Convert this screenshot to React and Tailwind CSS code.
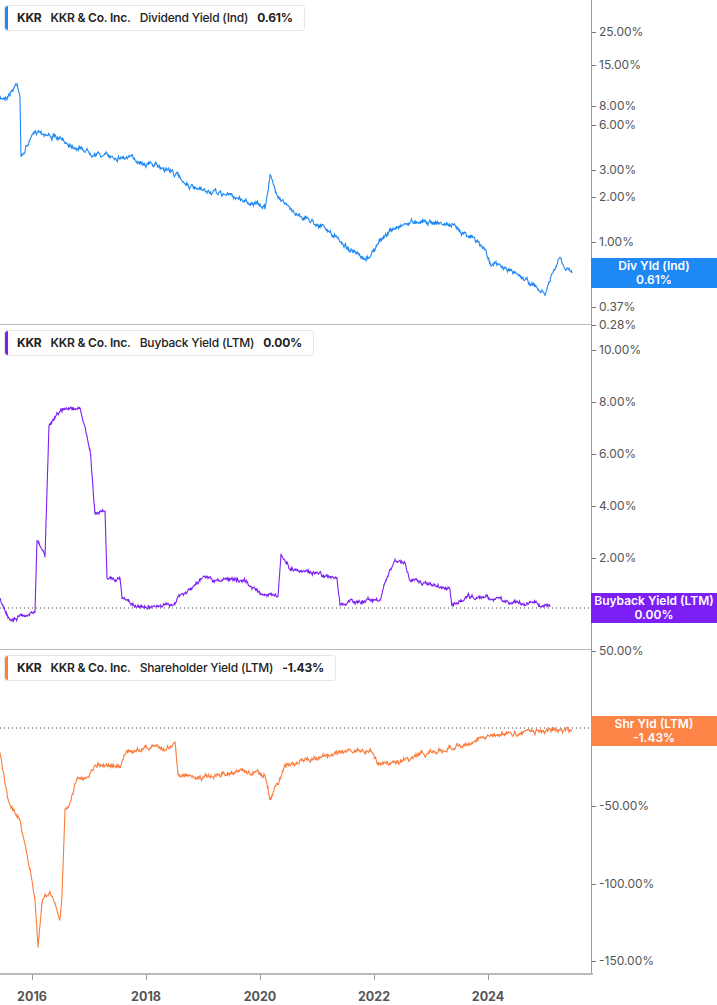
import React from "react";

function rng(seed) {
  let s = seed;
  return () => {
    s = (s * 16807) % 2147483647;
    return s / 2147483647 - 0.5;
  };
}
function build(pts, off, amp, seed) {
  const r = rng(seed);
  const out = [];
  let w = 0;
  for (let i = 0; i < pts.length - 1; i++) {
    const [x0, y0] = pts[i];
    const [x1, y1] = pts[i + 1];
    const n = Math.max(1, Math.round((x1 - x0) * 2));
    for (let k = 0; k < n; k++) {
      const t = k / n;
      const x = x0 + (x1 - x0) * t;
      w = w * 0.8 + r() * amp;
      const y = y0 + (y1 - y0) * t + w + r() * amp * 0.8;
      out.push(`${x.toFixed(1)},${(y - off).toFixed(1)}`);
    }
  }
  const l = pts[pts.length - 1];
  out.push(`${l[0]},${l[1] - off}`);
  return out.join(" ");
}

const blue = [[0,100],[8,95],[14,88],[17,82],[20,95],[21,158],[30,140],[38,130],[60,140],[80,148],[100,155],[130,158],[170,170],[195,190],[230,195],[265,208],[270,175],[275,190],[290,210],[320,225],[345,245],[365,262],[385,235],[400,225],[420,220],[450,225],[470,235],[485,250],[490,262],[520,275],[545,295],[550,280],[560,258],[565,270],[572,273]];
const purple = [[0,600],[8,619],[35,612],[37,540],[45,555],[49,425],[60,410],[80,408],[90,450],[95,512],[105,510],[107,578],[120,578],[122,598],[135,606],[175,605],[178,597],[190,590],[205,575],[215,580],[245,582],[265,597],[278,595],[281,556],[290,568],[320,575],[337,578],[340,606],[350,602],[380,600],[383,588],[395,558],[405,563],[410,580],[435,585],[450,590],[452,607],[468,596],[480,597],[520,603],[550,607]];
const orange = [[0,755],[8,800],[20,820],[30,870],[35,900],[38,945],[42,900],[50,890],[55,905],[60,920],[62,895],[65,810],[70,800],[78,780],[90,775],[95,765],[120,765],[125,755],[145,748],[175,745],[178,775],[200,778],[230,772],[265,775],[270,800],[275,790],[285,765],[310,760],[350,750],[370,752],[380,765],[395,762],[430,752],[450,748],[480,738],[520,731],[572,730]];

const font = { fontFamily: "Inter, 'Liberation Sans', sans-serif" };

function Header({ color, metric, value }) {
  return (
    <div className="absolute left-[4px] top-[5px] flex h-[26px] items-center gap-[9px] rounded-[3px] border border-[#e6e6e6] bg-white pr-[11px] text-[12px] tracking-[-0.2px] text-[#222]">
      <div className="h-full w-[3px] rounded-l-[3px]" style={{ background: color }} />
      <span className="font-bold">KKR</span>
      <span className="font-semibold">KKR &amp; Co. Inc.</span>
      <span className="font-medium">{metric}</span>
      <span className="font-bold">{value}</span>
    </div>
  );
}

function Axis({ labels, top }) {
  return (
    <div className="relative w-[126px] border-l border-[#999]">
      {labels.map(([t, y]) => (
        <div key={t} className="absolute left-0 flex items-center" style={{ top: y - top - 8 }}>
          <div className="h-px w-[4px] bg-[#777]" />
          <span className="ml-[3px] text-[12px] text-[#555]">{t}</span>
        </div>
      ))}
    </div>
  );
}

function Badge({ color, top, l1, l2 }) {
  return (
    <div className="absolute left-[591px] flex w-[126px] flex-col items-center justify-center text-[12px] font-semibold leading-[14px] text-white" style={{ top, height: 30, background: color }}>
      <span>{l1}</span>
      <span>{l2}</span>
    </div>
  );
}

export default function App() {
  return (
    <div className="relative h-[1005px] w-[717px] overflow-hidden bg-white" style={font}>
      <div className="flex h-[973px] flex-col">
        <div className="relative flex h-[325px]">
          <svg width="591" height="325" className="border-b border-[#bbb]">
            <polyline points={build(blue, 0, 3, 7)} fill="none" stroke="#1e88f5" strokeWidth="1.1" />
          </svg>
          <Axis top={0} labels={[["25.00%",31],["15.00%",64],["8.00%",105],["6.00%",124],["3.00%",169],["2.00%",196],["1.00%",241],["0.37%",306],["0.28%",324]]} />
          <Header color="#1e88f5" metric="Dividend Yield (Ind)" value="0.61%" />
        </div>
        <div className="relative flex h-[325px]">
          <svg width="591" height="325" className="border-b border-[#bbb]">
            <line x1="0" x2="591" y1="283" y2="283" stroke="#444" strokeDasharray="1 3" />
            <polyline points={build(purple, 325, 2.5, 11)} fill="none" stroke="#7b1ff5" strokeWidth="1.1" />
          </svg>
          <Axis top={325} labels={[["10.00%",349],["8.00%",401],["6.00%",453],["4.00%",505],["2.00%",557]]} />
          <Header color="#7b1ff5" metric="Buyback Yield (LTM)" value="0.00%" />
        </div>
        <div className="relative flex h-[323px]">
          <svg width="591" height="323">
            <line x1="0" x2="591" y1="78" y2="78" stroke="#444" strokeDasharray="1 3" />
            <polyline points={build(orange, 650, 3, 23)} fill="none" stroke="#fb7c3c" strokeWidth="1.1" />
          </svg>
          <Axis top={650} labels={[["50.00%",650],["-50.00%",805],["-100.00%",883],["-150.00%",960]]} />
          <Header color="#fb7c3c" metric="Shareholder Yield (LTM)" value="-1.43%" />
        </div>
      </div>
      <div className="relative h-[32px] w-[593px] border-t-2 border-[#bbb]">
        {[["2016",32],["2018",146],["2020",260],["2022",374],["2024",488]].map(([t, x]) => (
          <div key={t} className="absolute top-0 flex flex-col items-center" style={{ left: x - 20, width: 40 }}>
            <div className="h-[5px] w-px bg-[#999]" />
            <span className="mt-[8px] text-[12.5px] font-bold text-[#555]">{t}</span>
          </div>
        ))}
      </div>
      <Badge color="#1e88f5" top={258} l1="Div Yld (Ind)" l2="0.61%" />
      <Badge color="#7b1ff5" top={593} l1="Buyback Yield (LTM)" l2="0.00%" />
      <Badge color="#fb8446" top={716} l1="Shr Yld (LTM)" l2="-1.43%" />
    </div>
  );
}
